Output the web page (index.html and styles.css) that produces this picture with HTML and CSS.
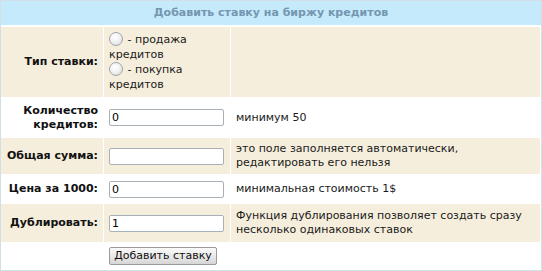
FILE: index.html
```html
<!DOCTYPE html>
<html lang="ru">
<head>
<meta charset="utf-8">
<link rel="stylesheet" href="styles.css">
</head>
<body>
<div class="box">
  <div class="head">Добавить ставку на биржу кредитов</div>
  <div class="grid">
    <div class="lab beige">Тип ставки:</div>
    <div class="mid beige radios">
      <div><span class="radio"></span> - продажа кредитов</div>
      <div><span class="radio"></span> - покупка кредитов</div>
    </div>
    <div class="note beige"></div>

    <div class="lab">Количество кредитов:</div>
    <div class="mid"><input class="field" type="text" value="0"></div>
    <div class="note">минимум 50</div>

    <div class="lab beige">Общая сумма:</div>
    <div class="mid beige"><input class="field" type="text" value=""></div>
    <div class="note beige">это поле заполняется автоматически, редактировать его нельзя</div>

    <div class="lab">Цена за 1000:</div>
    <div class="mid"><input class="field" type="text" value="0"></div>
    <div class="note">минимальная стоимость 1$</div>

    <div class="lab beige">Дублировать:</div>
    <div class="mid beige"><input class="field" type="text" value="1"></div>
    <div class="note beige">Функция дублирования позволяет создать сразу несколько одинаковых ставок</div>

    <div class="lab"></div>
    <div class="mid"><button class="btn" type="button">Добавить ставку</button></div>
    <div class="note"></div>
  </div>
</div>
</body>
</html>
```

FILE: styles.css
```css
html, body {
  margin: 0;
  padding: 0;
  background: #ffffff;
}
body {
  font-family: "DejaVu Sans", Verdana, sans-serif;
  font-size: 11px;
  color: #1a1a1a;
}
.box {
  width: 540px;
  height: 269px;
  border: 1px solid #d3dfe6;
  background: #ffffff;
}
.head {
  height: 24px;
  line-height: 24px;
  background: #c5eafc;
  color: #7596af;
  font-weight: bold;
  font-size: 11px;
  text-align: center;
  margin-bottom: 2px;
}
.grid {
  display: grid;
  grid-template-columns: 102px 126px 309px;
  column-gap: 1px;
  row-gap: 1px;
  grid-template-rows: 70px 39px 36px 28px 38px 25px;
}
.beige {
  background: #f5eedc;
}
.lab {
  font-weight: bold;
  text-align: right;
  padding-right: 5px;
  display: flex;
  align-items: center;
  justify-content: flex-end;
  line-height: 14px;
  color: #111;
}
.mid {
  display: flex;
  align-items: center;
  padding-left: 5px;
}
.radios {
  flex-direction: column;
  align-items: flex-start;
  justify-content: center;
  line-height: 15px;
}
.radio {
  display: inline-block;
  width: 12px;
  height: 12px;
  border: 1px solid #9ea4aa;
  border-radius: 50%;
  background: radial-gradient(circle at 40% 35%, #ffffff 0%, #f2f2f2 45%, #d6d6d6 100%);
  vertical-align: -3px;
  margin-right: 1px;
}
.note {
  display: flex;
  align-items: center;
  padding-left: 5px;
  line-height: 14px;
}
.field {
  width: 115px;
  height: 17px;
  box-sizing: border-box;
  border: 1px solid #a9b1b8;
  border-radius: 2px;
  background: #fff;
  font-family: "DejaVu Sans", Verdana, sans-serif;
  font-size: 11px;
  color: #000;
  padding: 0 2px;
  margin: 0;
}
.btn {
  width: 108px;
  height: 18px;
  border: 1px solid #9a9a9a;
  border-radius: 2px;
  background: linear-gradient(#fafafa, #e6e6e6 60%, #d6d6d6);
  font-family: "DejaVu Sans", Verdana, sans-serif;
  font-size: 11px;
  color: #111;
  padding: 0;
  margin: 0;
}
```
